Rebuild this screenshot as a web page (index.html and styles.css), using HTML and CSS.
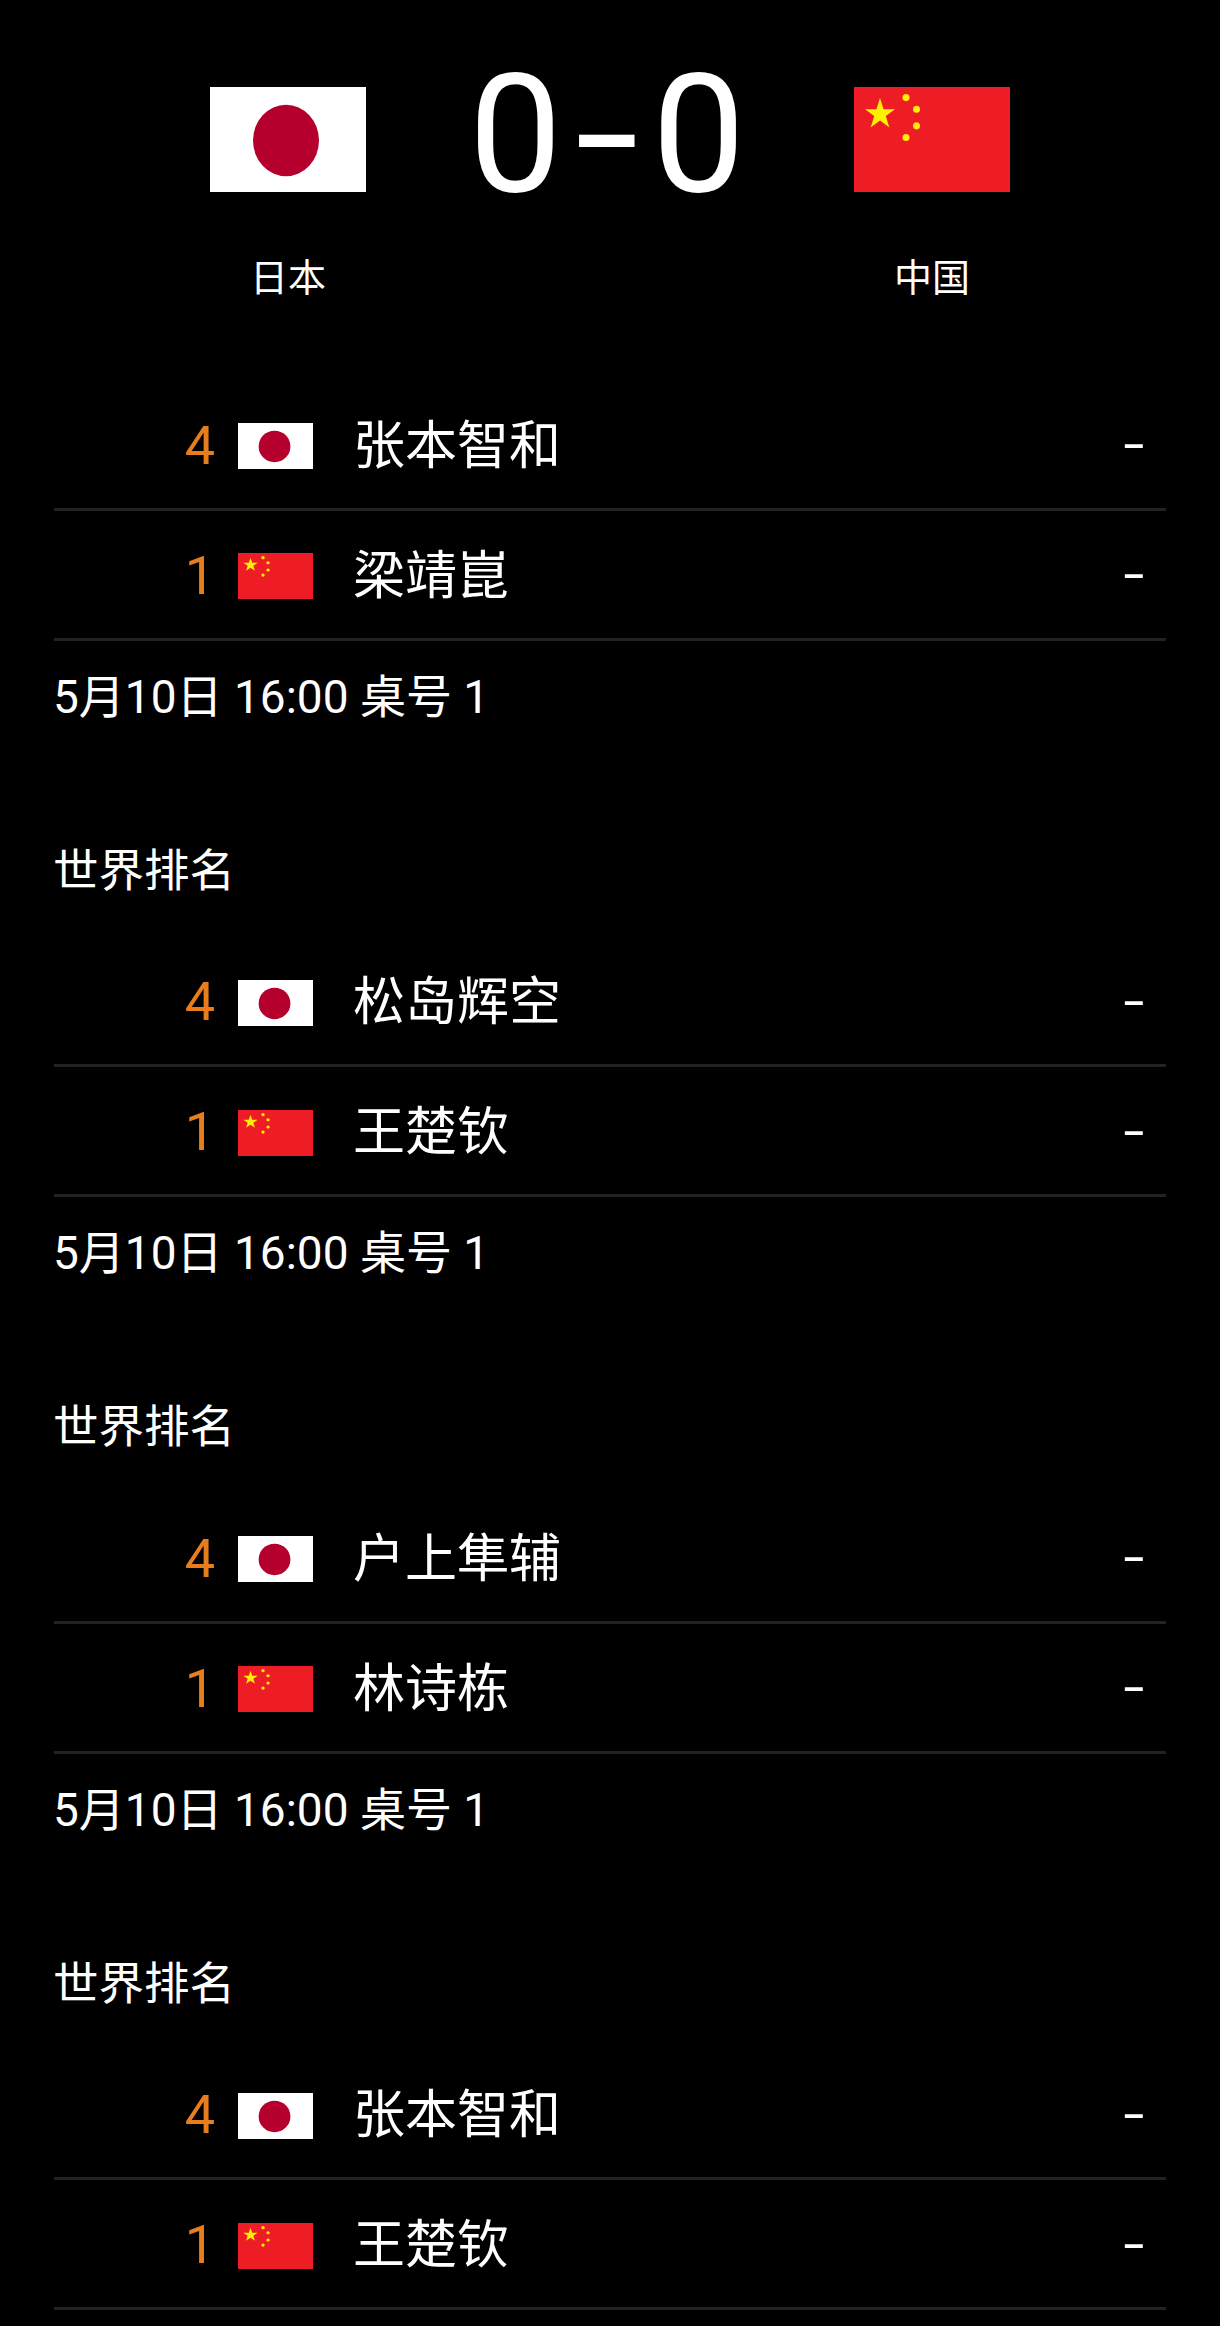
FILE: index.html

```html
<!DOCTYPE html>
<html lang="zh-CN">
<head>
  <meta charset="UTF-8">
  <title>日本 0-0 中国</title>
  <link rel="stylesheet" href="styles.css">
</head>
<body>
  <svg class="defs" width="0" height="0">
    <symbol id="flag-jp" viewBox="0 0 156 104" preserveAspectRatio="none">
      <rect width="156" height="104" fill="#fff"/>
      <ellipse cx="76" cy="53" rx="33" ry="35.5" fill="#b5002d"/>
    </symbol>
    <symbol id="flag-cn" viewBox="0 0 156 104" preserveAspectRatio="none">
      <rect width="156" height="104" fill="#ee1c25"/>
      <g fill="#ffef00">
        <polygon points="26,11 29.6,22 41,22 31.8,28.8 35.3,40 26,33.2 16.7,40 20.2,28.8 11,22 22.4,22"/>
        <circle cx="52" cy="10.5" r="3.5"/>
        <circle cx="62.5" cy="22" r="3.5"/>
        <circle cx="62.5" cy="38.5" r="3.5"/>
        <circle cx="52" cy="50" r="3.5"/>
      </g>
    </symbol>
  </svg>

  <header class="match">
    <div class="team">
      <svg class="flag-big"><use href="#flag-jp"/></svg>
      <div class="team-name">日本</div>
    </div>
    <div class="score">0<span class="dash">-</span>0</div>
    <div class="team">
      <svg class="flag-big"><use href="#flag-cn"/></svg>
      <div class="team-name">中国</div>
    </div>
  </header>

  <section class="game">
    <div class="row">
      <span class="rank">4</span>
      <svg class="flag"><use href="#flag-jp"/></svg>
      <span class="player">张本智和</span>
      <span class="pts">-</span>
    </div>
    <div class="row">
      <span class="rank">1</span>
      <svg class="flag"><use href="#flag-cn"/></svg>
      <span class="player">梁靖崑</span>
      <span class="pts">-</span>
    </div>
    <div class="info">5月10日 16:00 桌号 1</div>
    <div class="label">世界排名</div>
  </section>

  <section class="game">
    <div class="row">
      <span class="rank">4</span>
      <svg class="flag"><use href="#flag-jp"/></svg>
      <span class="player">松岛辉空</span>
      <span class="pts">-</span>
    </div>
    <div class="row">
      <span class="rank">1</span>
      <svg class="flag"><use href="#flag-cn"/></svg>
      <span class="player">王楚钦</span>
      <span class="pts">-</span>
    </div>
    <div class="info">5月10日 16:00 桌号 1</div>
    <div class="label">世界排名</div>
  </section>

  <section class="game">
    <div class="row">
      <span class="rank">4</span>
      <svg class="flag"><use href="#flag-jp"/></svg>
      <span class="player">户上隼辅</span>
      <span class="pts">-</span>
    </div>
    <div class="row">
      <span class="rank">1</span>
      <svg class="flag"><use href="#flag-cn"/></svg>
      <span class="player">林诗栋</span>
      <span class="pts">-</span>
    </div>
    <div class="info">5月10日 16:00 桌号 1</div>
    <div class="label">世界排名</div>
  </section>

  <section class="game last">
    <div class="row">
      <span class="rank">4</span>
      <svg class="flag"><use href="#flag-jp"/></svg>
      <span class="player">张本智和</span>
      <span class="pts">-</span>
    </div>
    <div class="row">
      <span class="rank">1</span>
      <svg class="flag"><use href="#flag-cn"/></svg>
      <span class="player">王楚钦</span>
      <span class="pts">-</span>
    </div>
  </section>
</body>
</html>
```

FILE: styles.css

```css
html, body { margin: 0; padding: 0; }
body {
  background-color: #000;
  color: #fff;
  font-family: Roboto, 'Noto Sans CJK SC', sans-serif;
  height: 2326px;
  overflow: hidden;
}
.defs { display: block; height: 0; }

.match {
  display: grid;
  grid-template-columns: 156px 1fr 156px;
  padding: 87px 210px 0;
  height: 380.5px;
  box-sizing: border-box;
}
.team { text-align: center; }
.flag-big { display: block; width: 156px; height: 105px; }
.team-name { font-size: 38px; line-height: 50px; margin-top: 61px; }
.score {
  font-size: 166px;
  line-height: 95px;
  text-align: center;
  margin-left: -6px;
}
.dash { display: inline-block; transform: scaleX(1.4); margin: 0 22px; }

.game { padding: 87px 54px 0 54px; height: 556.6px; box-sizing: border-box; }
.game:first-of-type { height: 469.6px; padding-top: 0; }
.game.last { height: auto; }
.row {
  display: grid;
  grid-template-columns: 161px 75px 1fr 20px;
  column-gap: 23px;
  align-items: center;
  height: 130px;
  box-sizing: border-box;
  border-bottom: 3px solid #222;
  padding-right: 22px;
}
.rank { font-size: 54px; color: #e87d1e; text-align: right; margin-top: 2px; }
.flag { display: block; width: 75px; height: 46px; margin-top: 4px; }
.player { font-size: 52px; margin-left: 17px; margin-bottom: 6px; }
.pts { font-size: 50px; text-align: center; transform: scaleX(1.5); }
.info { font-size: 46px; line-height: 50px; margin-top: 31px; margin-left: -1px; }
.label { font-size: 45.5px; line-height: 60px; margin-top: 120px; margin-left: -1px; }
```
